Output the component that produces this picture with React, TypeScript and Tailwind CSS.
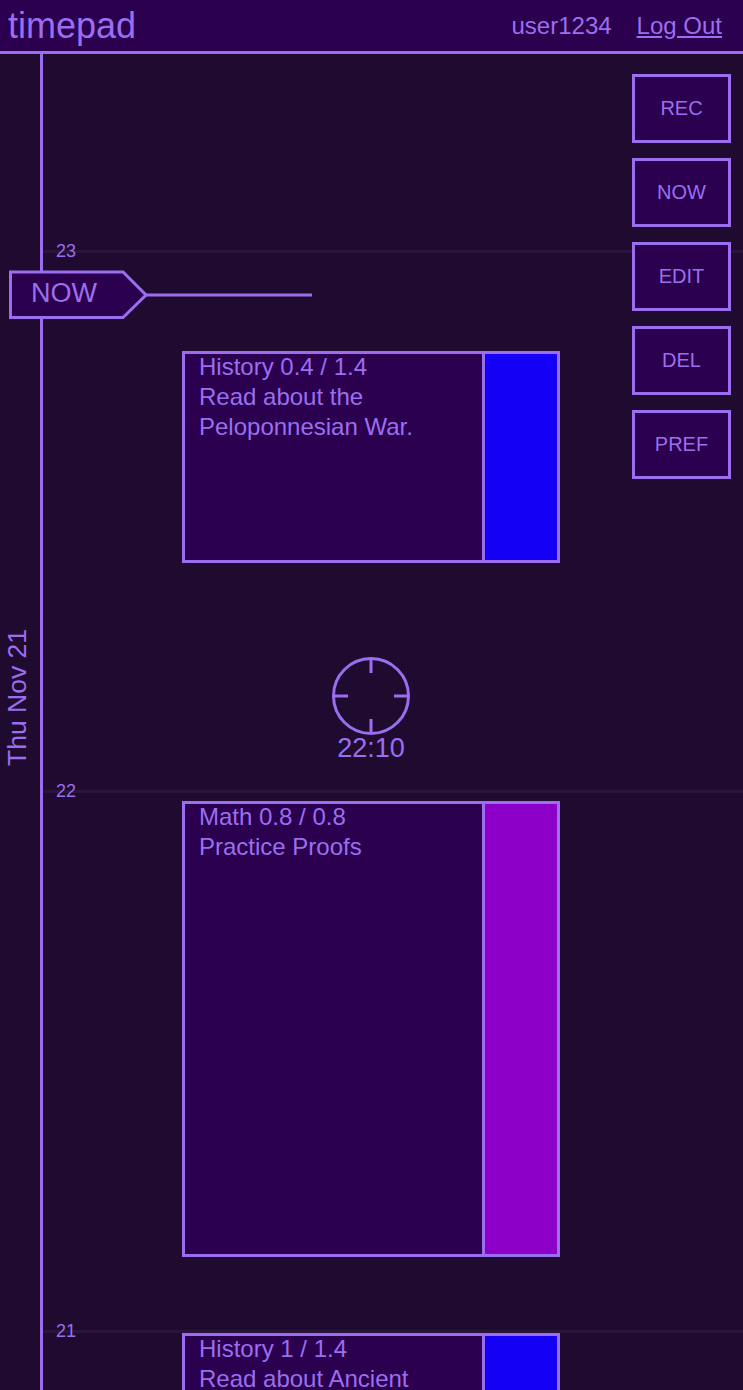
function Tool({ label }: { label: string }) {
  return (
    <div className="w-[99px] h-[69px] flex items-center justify-center pb-[2px] border-[3px] border-[#9b6ef0] bg-[#2a004f] text-[20px]">
      {label}
    </div>
  );
}

function Task({ className, title, lines, color }: { className: string; title: string; lines: string[]; color: string }) {
  return (
    <div className={`shrink-0 flex border-[3px] border-[#9b6ef0] bg-[#2a004f] overflow-hidden ${className}`}>
      <div className="flex-1 pl-[14px] text-[24px] leading-[30px] -mt-[2px]">
        <div>{title}</div>
        {lines.map((l) => (
          <div key={l}>{l}</div>
        ))}
      </div>
      <div style={{ backgroundColor: color }} className="w-[75px] border-l-[3px] border-[#9b6ef0]" />
    </div>
  );
}

function Hour({ className, label }: { className: string; label: string }) {
  return (
    <div className={`absolute left-0 right-0 h-[3px] bg-[#29143c] ${className}`}>
      <span className="absolute left-[13px] -top-[9px] text-[18px] leading-[20px]">{label}</span>
    </div>
  );
}

export default function App() {
  return (
    <div className="relative w-[743px] h-[1390px] overflow-hidden flex flex-col bg-[#200b30] text-[#9b6ef0] font-['Liberation_Sans',Arial,sans-serif]">
      <header className="h-[54px] shrink-0 flex items-center gap-[25px] bg-[#2a004f] border-b-[3px] border-[#9b6ef0] pl-[8px] pr-[21px]">
        <div className="text-[36px] leading-[50px] mr-auto">timepad</div>
        <div className="text-[24px]">user1234</div>
        <a className="text-[24px] underline">Log Out</a>
      </header>

      <main className="relative flex-1 flex min-h-0">
        <aside className="w-[43px] shrink-0 border-r-[3px] border-[#9b6ef0] flex items-center justify-center pb-[50px] pr-[6px]">
          <span className="[writing-mode:vertical-rl] rotate-180 whitespace-nowrap text-[26.5px] leading-[28px]">Thu Nov 21</span>
        </aside>

        <section className="relative flex-1 min-w-0 h-full">
          <Hour className="top-[196px]" label="23" />
          <Hour className="top-[736px]" label="22" />
          <Hour className="top-[1276px]" label="21" />

          <div className="relative ml-[139px] w-[378px] pt-[297px] flex flex-col">
            <Task className="h-[212px]" title="History 0.4 / 1.4" lines={["Read about the", "Peloponnesian War."]} color="#1400f5" />
            <div className="h-[238px] flex flex-col items-center pt-[93px]">
              <svg width="80" height="80" viewBox="0 0 80 80" className="shrink-0">
                <circle cx="40" cy="40" r="37.5" fill="none" stroke="#9b6ef0" strokeWidth="3" />
                <path d="M40 2V17M40 63V78M2 40H17M63 40H78" fill="none" stroke="#9b6ef0" strokeWidth="3" />
              </svg>
              <div className="text-[27px] leading-[30px] -mt-[3px]">22:10</div>
            </div>
            <Task className="h-[456px]" title="Math 0.8 / 0.8" lines={["Practice Proofs"]} color="#8c00c8" />
            <Task className="h-[120px] mt-[76px]" title="History 1 / 1.4" lines={["Read about Ancient"]} color="#1400f5" />
          </div>
        </section>

        {/* NOW marker lies over the timeline */}
        <div className="absolute left-[8px] top-[215px]">
          <svg width="306" height="50" viewBox="0 0 306 50" className="block">
            <path d="M2.5 3H115L138 26L115 48.5H2.5Z" fill="#2a004f" stroke="#9b6ef0" strokeWidth="3" />
            <path d="M138 26H304" fill="none" stroke="#9b6ef0" strokeWidth="3" />
          </svg>
          <div className="absolute left-[23px] top-[7px] text-[27px] leading-[34px]">NOW</div>
        </div>

        <div className="absolute right-[12px] top-[20px] flex flex-col gap-[15px]">
          {["REC", "NOW", "EDIT", "DEL", "PREF"].map((l) => (
            <Tool key={l} label={l} />
          ))}
        </div>
      </main>
    </div>
  );
}
